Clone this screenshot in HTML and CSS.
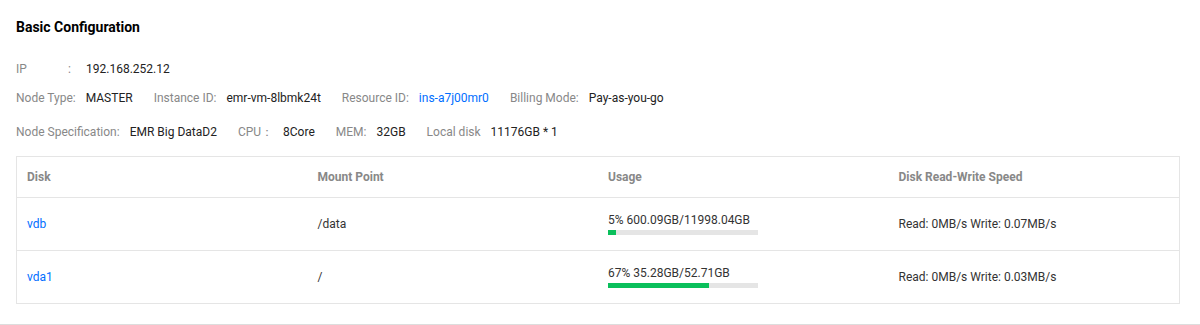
FILE: index.html
```html
<!DOCTYPE html>
<html lang="en">
<head>
<meta charset="utf-8">
<title>Basic Configuration</title>
<link rel="stylesheet" href="styles.css">
</head>
<body>
<div class="panel">
  <h2 class="title">Basic Configuration</h2>
  <div class="info info-ip">
    <span class="ip-label">IP</span><span class="ip-colon">:</span><span class="value">192.168.252.12</span>
  </div>
  <div class="info info-node">
    <span class="item"><span class="label">Node Type:</span><span class="value">MASTER</span></span>
    <span class="item"><span class="label">Instance ID:</span><span class="value">emr-vm-8lbmk24t</span></span>
    <span class="item"><span class="label">Resource ID:</span><span class="value link">ins-a7j00mr0</span></span>
    <span class="item"><span class="label">Billing Mode:</span><span class="value">Pay-as-you-go</span></span>
  </div>
  <div class="info info-spec">
    <span class="item"><span class="label">Node Specification:</span><span class="value">EMR Big DataD2</span></span>
    <span class="item"><span class="label">CPU：</span><span class="value">8Core</span></span>
    <span class="item"><span class="label">MEM:</span><span class="value">32GB</span></span>
    <span class="item"><span class="label">Local disk</span><span class="value">11176GB * 1</span></span>
  </div>
  <div class="table">
    <div class="row head">
      <div class="cell">Disk</div>
      <div class="cell">Mount Point</div>
      <div class="cell">Usage</div>
      <div class="cell">Disk Read-Write Speed</div>
    </div>
    <div class="row">
      <div class="cell link">vdb</div>
      <div class="cell">/data</div>
      <div class="cell usage">
        <div class="usage-text">5% 600.09GB/11998.04GB</div>
        <div class="bar"><div class="fill" style="width:5%"></div></div>
      </div>
      <div class="cell">Read: 0MB/s Write: 0.07MB/s</div>
    </div>
    <div class="row">
      <div class="cell link">vda1</div>
      <div class="cell">/</div>
      <div class="cell usage">
        <div class="usage-text">67% 35.28GB/52.71GB</div>
        <div class="bar"><div class="fill" style="width:67%"></div></div>
      </div>
      <div class="cell">Read: 0MB/s Write: 0.03MB/s</div>
    </div>
  </div>
</div>
</body>
</html>
```

FILE: styles.css
```css
* { box-sizing: border-box; }
html, body { margin: 0; padding: 0; background: #fff; }
body {
  font-family: Roboto, "Liberation Sans", Arial, sans-serif;
  font-size: 12px;
  color: #333;
}
.panel {
  height: 325px;
  padding: 17px 20px 0 16px;
  border-bottom: 1px solid #dddddd;
}
.title {
  margin: 0;
  font-size: 14px;
  line-height: 20px;
  font-weight: 700;
  color: #000;
}
.info {
  display: flex;
  align-items: center;
  line-height: 18px;
  white-space: nowrap;
}
.info-ip { margin-top: 23px; }
.info-node { margin-top: 11px; }
.info-spec { margin-top: 16px; }
.ip-label { width: 52px; color: #888; }
.ip-colon { width: 18px; color: #888; }
.item { display: inline-flex; margin-right: 21px; }
.label { color: #888; margin-right: 10px; }
.value { color: #222; }
.link { color: #006eff; }
.table {
  margin-top: 15px;
  border: 1px solid #e5e5e5;
}
.row {
  display: grid;
  grid-template-columns: repeat(4, 1fr);
  height: 53px;
  border-top: 1px solid #e5e5e5;
}
.row.head {
  height: 40px;
  border-top: none;
  font-weight: 700;
  color: #888;
}
.cell {
  display: flex;
  flex-direction: column;
  justify-content: center;
  padding: 0 10px;
  line-height: 16px;
}
.row:not(.head) .cell:not(.link) { color: #333; }
.usage-text { line-height: 16px; margin-top: -1px; }
.bar {
  width: 150px;
  height: 5px;
  margin-top: 2px;
  background: #e5e5e5;
}
.fill {
  height: 100%;
  background: #0abf5b;
}
```
